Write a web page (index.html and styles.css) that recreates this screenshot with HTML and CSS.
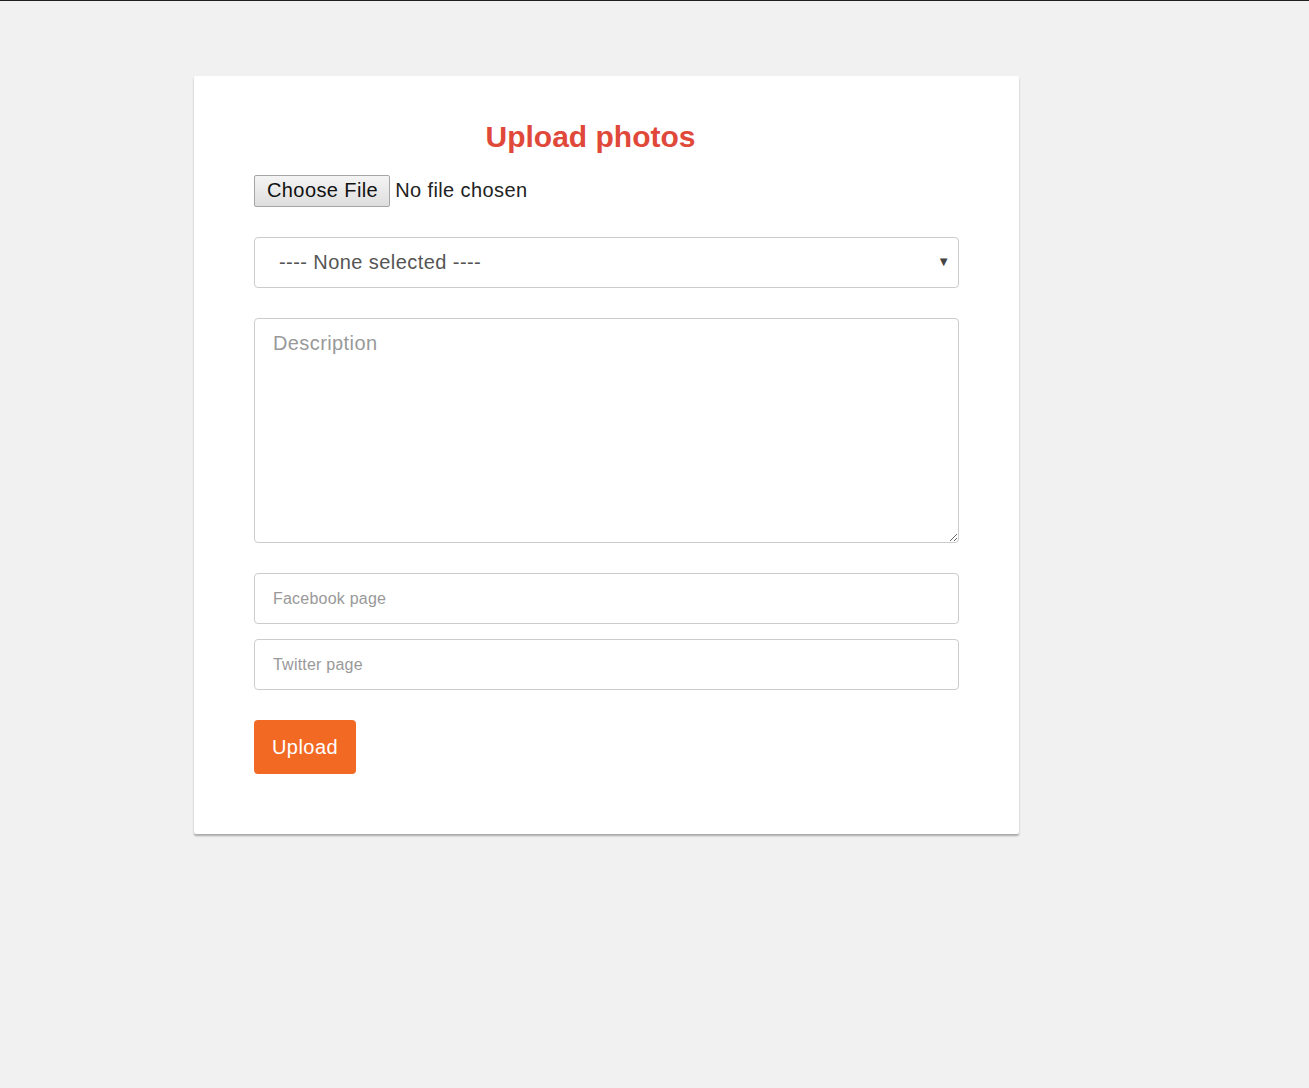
FILE: index.html
```html
<!DOCTYPE html>
<html>
<head>
<meta charset="utf-8">
<title>Upload photos</title>
<link rel="stylesheet" href="styles.css">
</head>
<body>
<div class="page">
  <form class="card">
    <h1 class="title">Upload photos</h1>
    <div class="file-row">
      <span class="file-btn">Choose File</span>
      <span class="file-name">No file chosen</span>
    </div>
    <div class="select-wrap">
      <select class="field select">
        <option>---- None selected ----</option>
      </select>
    </div>
    <textarea class="field textarea" placeholder="Description"></textarea>
    <div class="links">
      <input class="field small" type="text" placeholder="Facebook page">
      <input class="field small" type="text" placeholder="Twitter page">
    </div>
    <div class="actions">
      <button type="button" class="upload">Upload</button>
    </div>
  </form>
</div>
</body>
</html>
```

FILE: styles.css
```css
html, body {
  margin: 0;
  padding: 0;
}
body {
  background: #f1f1f1;
  border-top: 1px solid #1f1f1f;
  font-family: "Liberation Sans", Arial, sans-serif;
  min-height: 1087px;
}
.page {
  padding: 75px 0 0 194px;
}
.card {
  width: 705px;
  background: #fff;
  padding: 36px 60px 60px 60px;
  border-radius: 2px;
  box-shadow: 0 2px 2px rgba(0,0,0,0.3);
  display: flex;
  flex-direction: column;
}
.title {
  margin: 0;
  font-size: 30px;
  line-height: 50px;
  font-weight: bold;
  color: #e0493a;
  text-align: center;
  padding-right: 32px;
}
.file-row {
  display: flex;
  align-items: center;
  margin-top: 13px;
  font-size: 20px;
  letter-spacing: 0.4px;
  color: #222;
}
.file-btn {
  box-sizing: border-box;
  height: 32px;
  padding: 0 11px 1px 12px;
  display: flex;
  align-items: center;
  border: 1px solid #a6a6a6;
  border-radius: 2px;
  background: linear-gradient(#f4f4f4, #dedede);
  color: #111;
}
.file-name {
  margin-left: 5px;
  padding-bottom: 1px;
}
.select-wrap {
  position: relative;
  margin-top: 30px;
}
.select-wrap::after {
  content: "\25BC";
  position: absolute;
  right: 9px;
  top: 17px;
  font-size: 13px;
  color: #444;
  pointer-events: none;
}
.field {
  box-sizing: border-box;
  display: block;
  width: 705px;
  border: 1px solid #cccccc;
  border-radius: 4px;
  background: #fff;
  font-family: "Liberation Sans", Arial, sans-serif;
  margin: 0;
  outline: none;
}
.select {
  -webkit-appearance: none;
  appearance: none;
  height: 51px;
  padding: 0 24px 2px;
  font-size: 20px;
  letter-spacing: 0.43px;
  color: #555;
}
.textarea {
  margin-top: 30px;
  height: 225px;
  padding: 12px 18px;
  font-size: 20px;
  letter-spacing: 0.4px;
  line-height: 24px;
  color: #555;
  resize: vertical;
}
.textarea::placeholder {
  color: #999;
}
.links {
  margin-top: 30px;
  display: flex;
  flex-direction: column;
  gap: 15px;
}
.small {
  height: 51px;
  padding: 0 18px;
  font-size: 16px;
  letter-spacing: 0.22px;
  color: #555;
}
.small::placeholder {
  color: #999;
}
.actions {
  margin-top: 30px;
}
.upload {
  width: 102px;
  height: 54px;
  border: none;
  border-radius: 4px;
  background: #f26924;
  color: #fff;
  font-family: "Liberation Sans", Arial, sans-serif;
  font-size: 20px;
  letter-spacing: 0.45px;
  padding: 0;
  cursor: pointer;
}
```
